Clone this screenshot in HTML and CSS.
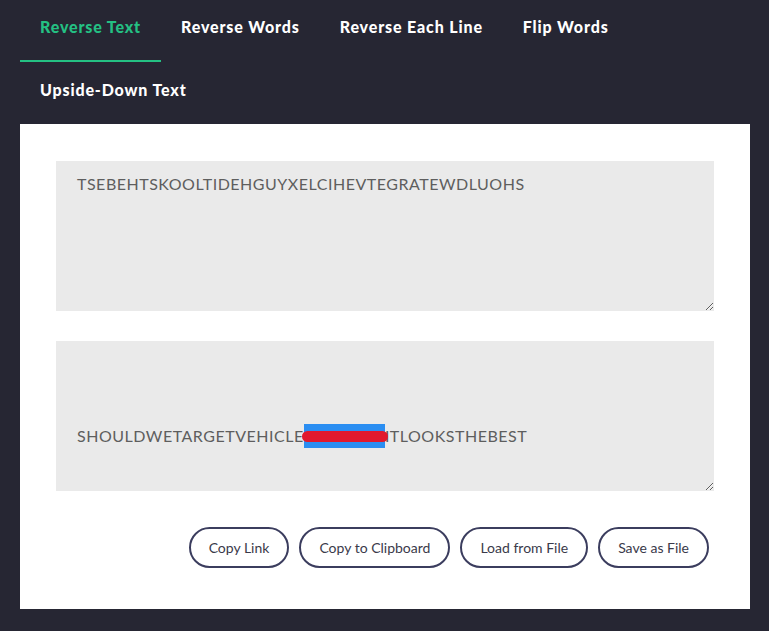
FILE: index.html
```html
<!DOCTYPE html>
<html lang="en">
<head>
<meta charset="utf-8">
<title>Reverse Text</title>
<link rel="stylesheet" href="styles.css">
</head>
<body>
<nav class="tabs">
  <a class="tab active">Reverse Text</a>
  <a class="tab">Reverse Words</a>
  <a class="tab">Reverse Each Line</a>
  <a class="tab">Flip Words</a>
  <a class="tab">Upside-Down Text</a>
</nav>
<main class="panel">
  <div class="box">TSEBEHTSKOOLTIDEHGUYXELCIHEVTEGRATEWDLUOHS</div>
  <div class="box"><br><br><br>SHOULDWETARGETVEHICLE<span class="sel">XYUGHED</span>ITLOOKSTHEBEST</div>
  <div class="actions">
    <button class="btn">Copy Link</button>
    <button class="btn">Copy to Clipboard</button>
    <button class="btn">Load from File</button>
    <button class="btn">Save as File</button>
  </div>
</main>
</body>
</html>
```
FILE: styles.css
```css
html, body {
  margin: 0;
  padding: 0;
  background: #262633;
}
body {
  padding: 0 19px 0 20px;
  font-family: Lato, "Liberation Sans", sans-serif;
}
.tabs {
  display: flex;
  flex-wrap: wrap;
}
.tab {
  display: block;
  height: 60px;
  line-height: 53px;
  padding: 0 20px;
  border-bottom: 2px solid transparent;
  color: #ffffff;
  font-family: Lato, sans-serif;
  font-weight: 900;
  font-size: 16px;
  letter-spacing: 0.85px;
  cursor: pointer;
}
.tab:last-child {
  line-height: 56px;
}
.tab.active {
  color: #24c083;
  border-bottom-color: #24c083;
}
.panel {
  background: #ffffff;
  padding: 37px 36px 41px;
}
.box {
  box-sizing: border-box;
  height: 150px;
  background: #eaeaea;
  padding: 11px 21px 13px;
  font-size: 16px;
  line-height: 24px;
  letter-spacing: 0.52px;
  color: #5e5e5e;
  overflow: auto;
  resize: vertical;
  margin-bottom: 30px;
}
.box + .box {
  margin-bottom: 36px;
}
.sel {
  position: relative;
  display: inline-block;
  line-height: 24px;
  background: #2b8ef2;
  color: #2b8ef2;
}
.sel::after {
  content: "";
  position: absolute;
  left: -2px;
  right: -3px;
  top: 7px;
  height: 11px;
  border-radius: 6px;
  background: #e1192e;
}
.actions {
  display: flex;
  justify-content: flex-end;
  gap: 10px;
  padding-right: 5px;
}
.btn {
  height: 41px;
  padding: 0 18px;
  border: 2px solid #3b3d5e;
  border-radius: 21px;
  background: #ffffff;
  font-family: Lato, sans-serif;
  font-size: 14px;
  color: #3a3a4a;
  cursor: pointer;
}
```
